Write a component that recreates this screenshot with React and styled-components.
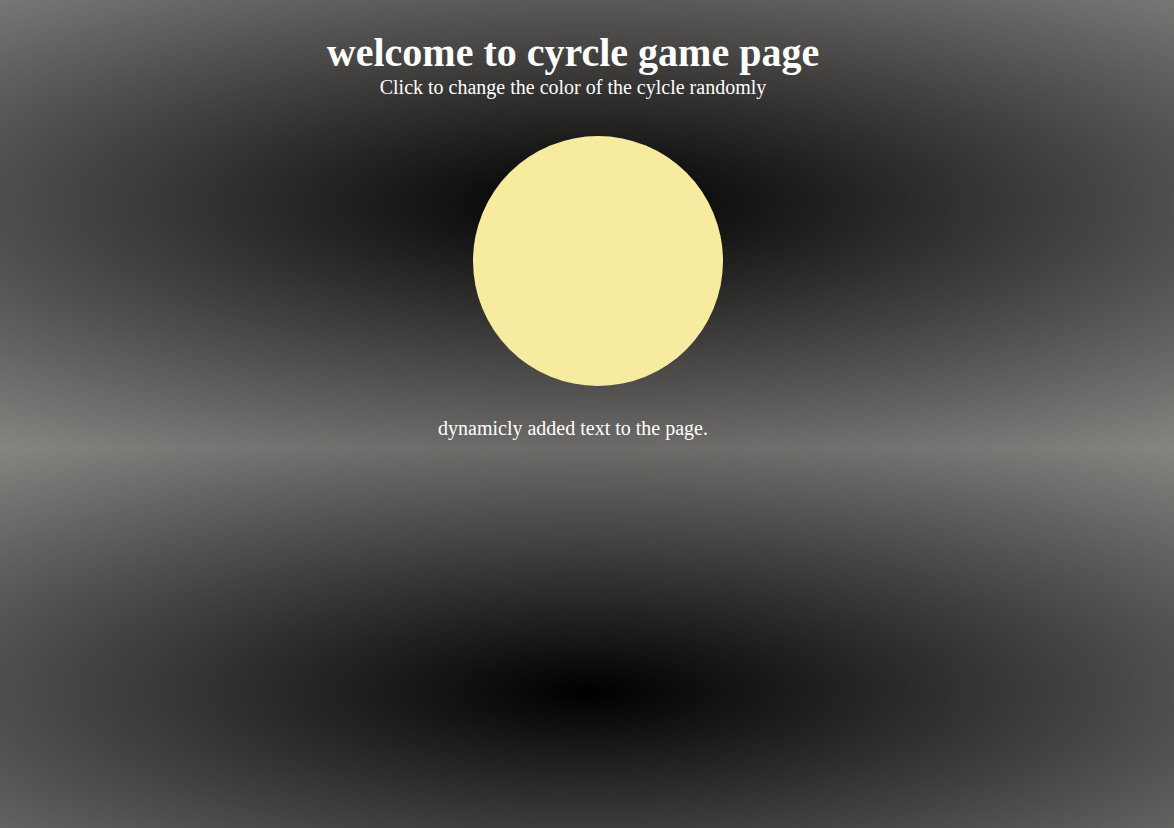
import React, { useState } from 'react';
import styled, { createGlobalStyle } from 'styled-components';

const GlobalStyle = createGlobalStyle`
  html, body {
    margin: 0;
    padding: 0;
  }
  body {
    font-family: "Liberation Serif", "Times New Roman", serif;
  }
`

const Page = styled.div`
  min-height: 100vh;
  box-sizing: border-box;
  padding: 30px 28px 0 0;
  display: flex;
  flex-direction: column;
  align-items: center;
  color: white;
  background-color: #3a3937;
  background-image: radial-gradient(
    1000px 303px at 50% 50%,
    #000 0%,
    rgb(135, 133, 130) 100%
  );
  background-size: 100% 488px;
  background-position: 0 -40px;
  background-repeat: repeat-y;
`

const Title = styled.h1`
  margin: 0;
  font-size: 40px;
  line-height: 46px;
  font-weight: bold;
  text-align: center;
`

const Subtitle = styled.p`
  margin: 0;
  font-size: 20px;
  line-height: 23px;
  text-align: center;
`

const Circle = styled.div`
  width: 250px;
  height: 250px;
  border-radius: 50%;
  margin: 37px 0 0 50px;
  background: ${props => props.color};
  cursor: pointer;
`

const Note = styled.p`
  margin: 31px 0 0;
  font-size: 20px;
  line-height: 23px;
  text-align: center;
`

const randomColor = () =>
  '#' + Math.floor(Math.random() * 0xffffff).toString(16).padStart(6, '0');

export default function App() {
  const [color, setColor] = useState('#f6eb9f');

  return (
    <>
      <GlobalStyle />
      <Page>
        <Title>welcome to cyrcle game page</Title>
        <Subtitle>Click to change the color of the cylcle randomly</Subtitle>
        <Circle color={color} onClick={() => setColor(randomColor())} />
        <Note>dynamicly added text to the page.</Note>
      </Page>
    </>
  );
}
